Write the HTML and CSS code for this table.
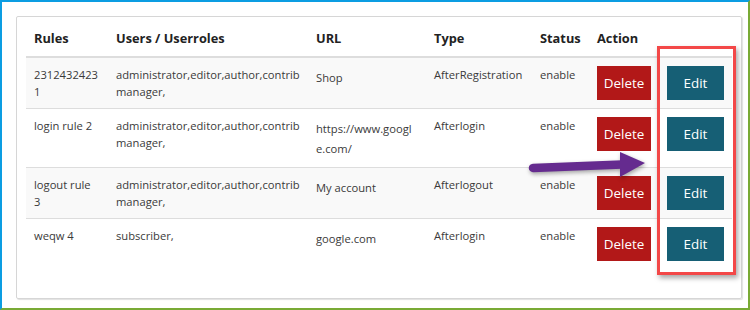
FILE: index.html
```html
<!DOCTYPE html>
<html>
<head>
<meta charset="utf-8">
<link rel="stylesheet" href="styles.css">
</head>
<body>
<div class="frame">
  <div class="card">
    <table class="rules">
      <colgroup>
        <col class="c-rules"><col class="c-users"><col class="c-url"><col class="c-type"><col class="c-status"><col class="c-action"><col class="c-edit">
      </colgroup>
      <thead>
        <tr><th>Rules</th><th>Users / Userroles</th><th>URL</th><th>Type</th><th>Status</th><th>Action</th><th></th></tr>
      </thead>
      <tbody>
        <tr class="odd">
          <td class="brk">23124324231</td>
          <td><div class="roles">administrator,editor,author,contributor,shop manager,</div></td>
          <td class="url">Shop</td>
          <td>AfterRegistration</td>
          <td>enable</td>
          <td><button class="btn del">Delete</button></td>
          <td><button class="btn edit">Edit</button></td>
        </tr>
        <tr>
          <td>login rule 2</td>
          <td><div class="roles">administrator,editor,author,contributor,shop manager,</div></td>
          <td class="url brk">https://www.google.com/</td>
          <td>Afterlogin</td>
          <td>enable</td>
          <td><button class="btn del">Delete</button></td>
          <td><button class="btn edit">Edit</button></td>
        </tr>
        <tr class="odd">
          <td>logout rule<br>3</td>
          <td><div class="roles">administrator,editor,author,contributor,shop manager,</div></td>
          <td class="url">My account</td>
          <td>Afterlogout</td>
          <td>enable</td>
          <td><button class="btn del">Delete</button></td>
          <td><button class="btn edit">Edit</button></td>
        </tr>
        <tr>
          <td>weqw 4</td>
          <td><div class="roles">subscriber,</div></td>
          <td class="url">google.com</td>
          <td>Afterlogin</td>
          <td>enable</td>
          <td><button class="btn del">Delete</button></td>
          <td><button class="btn edit">Edit</button></td>
        </tr>
      </tbody>
    </table>
  </div>
  <div class="highlight"></div>
  <svg class="arrow" width="130" height="40" viewBox="0 0 130 40">
    <path d="M7 19 L96 15.5" stroke="#652b8f" stroke-width="8.5" stroke-linecap="round" fill="none"/>
    <path d="M94 3 L119 14 L94 28 Z" fill="#652b8f"/>
  </svg>
</div>
</body>
</html>
```
FILE: styles.css
```css
html, body {
  margin: 0;
  padding: 0;
  background: #fff;
}
.frame {
  position: relative;
  box-sizing: border-box;
  width: 750px;
  height: 310px;
  border-top: 2px solid #0c9de2;
  border-left: 2px solid #0c9de2;
  border-right: 2px solid #79aa35;
  border-bottom: 2px solid #79aa35;
  padding: 14px 6px 0 14px;
  font-family: "Open Sans", "Noto Sans", sans-serif;
}
.card {
  box-sizing: border-box;
  width: 726px;
  height: 283px;
  border: 1px solid #d6d6d6;
  border-radius: 2px;
  box-shadow: 1px 1px 1px rgba(0,0,0,0.12);
  padding: 3px 9px 0 9px;
}
.rules {
  border-collapse: collapse;
  table-layout: fixed;
  width: 706px;
  color: #3a3a3a;
  font-size: 11.2px;
}
.c-rules { width: 82px; }
.c-users { width: 200px; }
.c-url { width: 118px; }
.c-type { width: 106px; }
.c-status { width: 57px; }
.c-action { width: 70px; }
.c-edit { width: 73px; }
.rules th {
  text-align: left;
  font-weight: 700;
  font-size: 12.8px;
  color: #222;
  padding: 8px;
  line-height: 20px;
  border-bottom: 2px solid #dddddd;
}
.rules td {
  vertical-align: top;
  padding: 8px;
  line-height: 17px;
  border-top: 1px solid #dddddd;
}
.rules tbody tr:first-child td { border-top: 0; }
.rules tr.odd td { background: #f9f9f9; }
.rules td.url {
  padding-top: 10px;
  line-height: 20px;
}
.brk { word-break: break-all; }
.roles {
  width: 184px;
  overflow: hidden;
}
.btn {
  display: block;
  height: 34px;
  border: 0;
  border-radius: 0;
  color: #fff;
  font-family: "Open Sans", "Noto Sans", sans-serif;
  font-size: 13.4px;
  padding: 0;
}
.del { width: 54px; background: #b21818; }
.edit { width: 57px; background: #165f75; }
.highlight {
  position: absolute;
  left: 655px;
  top: 44px;
  width: 73px;
  height: 223px;
  border: 3px solid #f34848;
  box-shadow: 2px 3px 5px rgba(0,0,0,0.35);
}
.arrow {
  position: absolute;
  left: 524px;
  top: 147px;
  filter: drop-shadow(1px 2px 2px rgba(0,0,0,0.35));
}
```
